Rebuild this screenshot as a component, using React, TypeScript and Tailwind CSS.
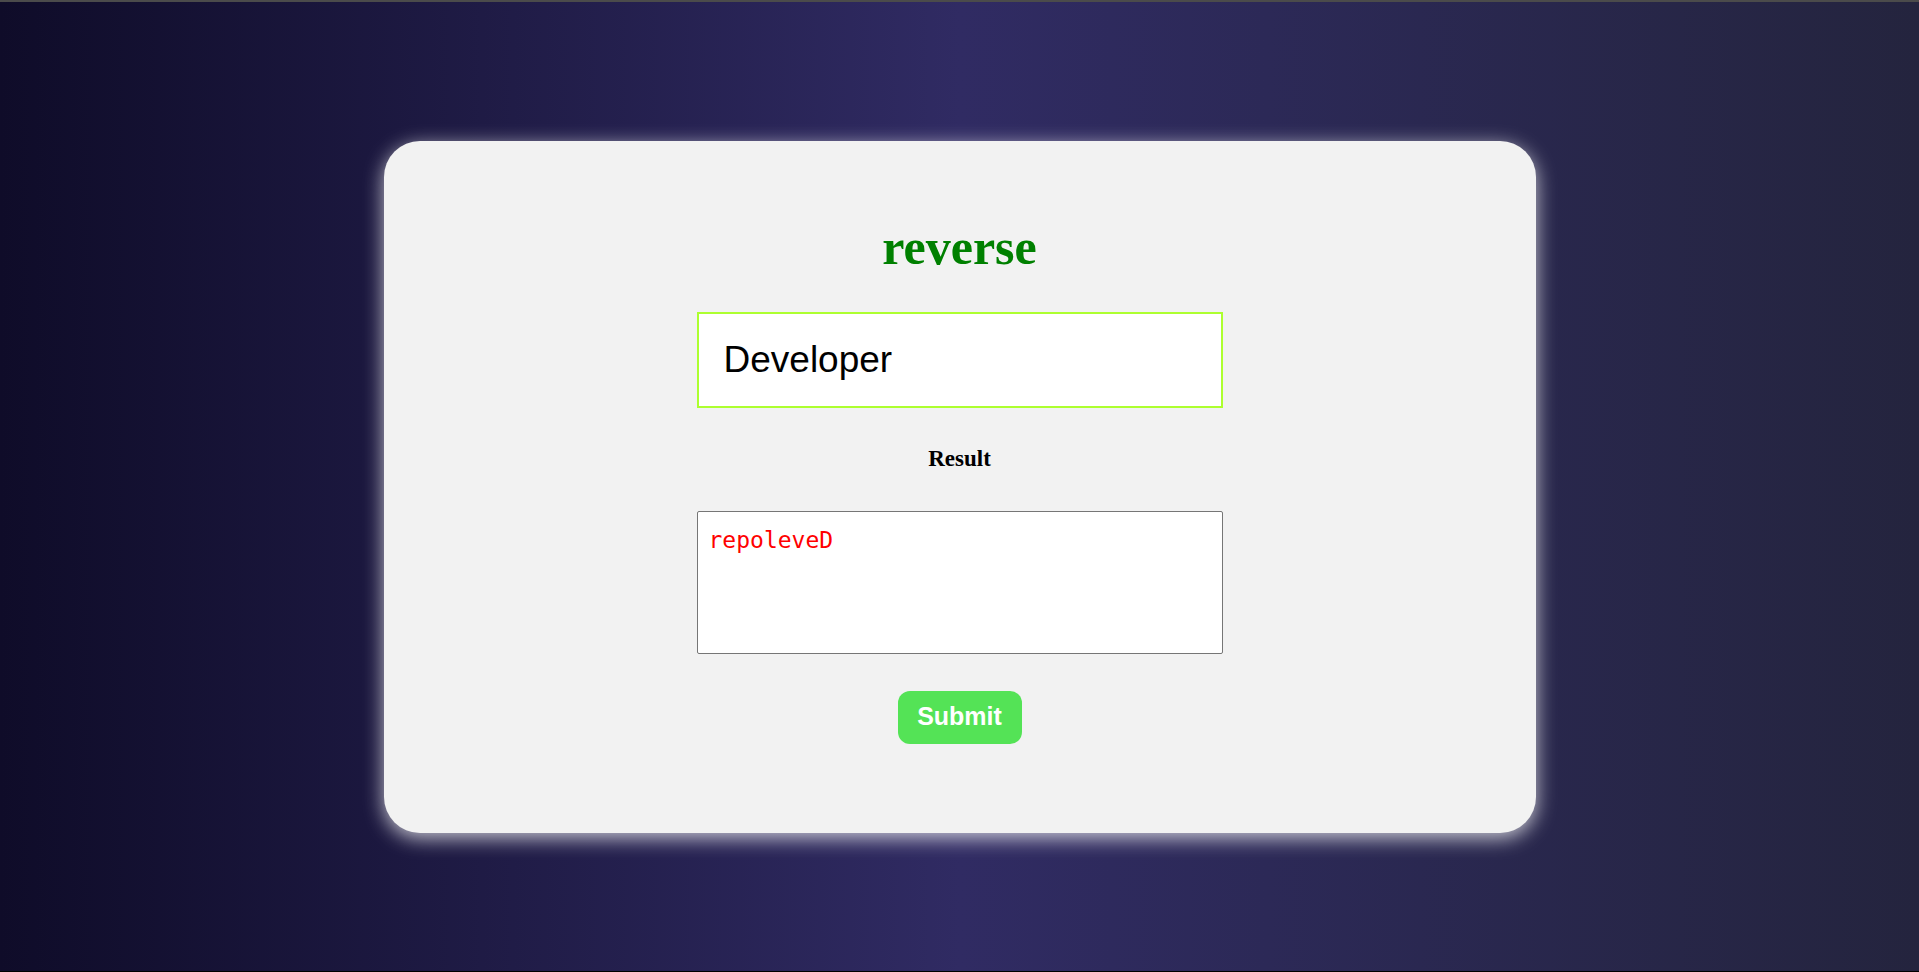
import { useState } from "react";

const App = () => {
  const [text, setText] = useState("Developer");
  const [result, setResult] = useState("repoleveD");

  const handleSubmit = (e: React.FormEvent) => {
    e.preventDefault();
    setResult(text.split("").reverse().join(""));
  };

  return (
    <div className="min-h-screen flex items-center justify-center border-t-2 border-t-[#4b4b4b] border-b border-b-black bg-gradient-to-r from-[#0f0c29] via-[#302b63] to-[#24243e]">
      {/* 카드 */}
      <form
        onSubmit={handleSubmit}
        className="w-[1152px] h-[692px] bg-[#f2f2f2] rounded-[36px] shadow-[0_5px_20px_rgba(255,255,255,0.75)] flex flex-col items-center pt-[78px]"
      >
        <h1 className="font-['Liberation_Serif',serif] font-bold text-[50px] leading-[56px] text-[#008000]">
          reverse
        </h1>

        <input
          value={text}
          onChange={(e) => setText(e.target.value)}
          className="mt-[37px] w-[526px] h-[96px] bg-white border-2 border-[#adff2f] pl-[25px] pr-[24px] font-['Liberation_Sans',Arial,sans-serif] text-[37px] text-black outline-none"
        />

        <h3 className="mt-[38px] font-['Liberation_Serif',serif] font-bold text-[23px] leading-[26px] text-black">
          Result
        </h3>

        <textarea
          readOnly
          value={result}
          className="mt-[39px] w-[526px] h-[143px] bg-white border border-[#767676] rounded-[2px] pt-[15px] px-[11px] font-['DejaVu_Sans_Mono',monospace] text-[23px] leading-[26px] text-[#ff0000] resize-none outline-none"
        />

        <button
          type="submit"
          className="mt-[37px] w-[124px] h-[53px] rounded-[12px] bg-[#54e356] text-white font-['Liberation_Sans',Arial,sans-serif] font-bold text-[25px]"
        >
          Submit
        </button>
      </form>
    </div>
  );
};

export default App;
